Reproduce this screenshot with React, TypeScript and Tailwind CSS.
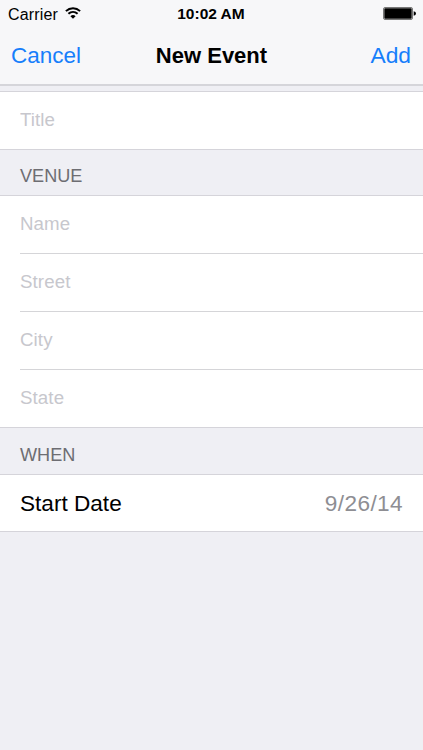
import type { ReactNode } from "react";

function StatusBar() {
  return (
    <div className="grid h-7 grid-cols-3 items-center pl-2 pr-[7px]">
      <div className="flex items-center gap-[7px]">
        <span className="pt-px text-[16px] leading-5 tracking-[0.15px]">Carrier</span>
        <svg className="-mt-0.5 h-3 w-4 shrink-0" viewBox="0 0 16 12" fill="none" stroke="black">
          <path d="M0.9 4.1C5 0.2 11 0.2 15.1 4.1" strokeWidth="2" />
          <path d="M3.4 6.8C6.1 4.3 9.9 4.3 12.6 6.8" strokeWidth="2" />
          <path d="M8 11.8L5.4 9.2Q8 7 10.6 9.2Z" fill="black" stroke="none" />
        </svg>
      </div>
      <span className="whitespace-nowrap pr-0.5 text-center text-[15.5px] font-bold leading-5">10:02 AM</span>
      <svg className="-mt-px ml-auto h-[13px] w-[33px]" viewBox="0 0 33 13">
        <rect x="0.5" y="0.5" width="29" height="12" rx="1.5" fill="white" stroke="#777777" />
        <rect x="1.3" y="1.3" width="27.4" height="10.4" rx="0.7" fill="black" />
        <path d="M30.7 4.3Q33 4.8 33 6.5T30.7 8.7Z" fill="black" />
      </svg>
    </div>
  );
}

function SectionHeader({ children, className }: { children: ReactNode; className: string }) {
  return (
    <h2 className={`pl-5 text-[18.1px] leading-5 text-[#6d6d72] ${className}`}>{children}</h2>
  );
}

function Field({ label, last = false }: { label: string; last?: boolean }) {
  return (
    <div className={last ? "h-[57px] pl-5" : "h-[58px] pl-5"}>
      <div className={`flex h-full items-center ${last ? "" : "border-b border-[#d5d5d8]"}`}>
        <input
          aria-label={label}
          placeholder={label}
          className="h-full w-full bg-transparent pb-0.5 text-[18.7px] tracking-[0.1px] outline-none placeholder:text-[#c7c7cd]"
        />
      </div>
    </div>
  );
}

function Group({ children }: { children: ReactNode }) {
  return <div className="border-y border-[#d5d4da] bg-white">{children}</div>;
}

export default function App() {
  return (
    <main className="h-[750px] w-full overflow-hidden bg-[#efeff4] font-['Liberation_Sans',Arial,sans-serif] text-black">
      <header className="h-[86px] border-b-2 border-[#d5d5da] bg-[#f7f7f9]">
        <StatusBar />
        <nav className="grid h-14 grid-cols-3 items-center pl-[11px] pr-3">
          <button className="text-left text-[22.5px] text-[#167efb]">Cancel</button>
          <h1 className="whitespace-nowrap pb-px pl-px text-center text-[22px] font-bold">New Event</h1>
          <button className="pb-0.5 text-right text-[22.8px] text-[#167efb]">Add</button>
        </nav>
      </header>
      <div className="pt-[5px]">
        <Group>
          <Field label="Title" last />
        </Group>
        <SectionHeader className="h-[45px] pt-4">VENUE</SectionHeader>
        <Group>
          <Field label="Name" />
          <Field label="Street" />
          <Field label="City" />
          <Field label="State" last />
        </Group>
        <SectionHeader className="h-[46px] pt-[17px]">WHEN</SectionHeader>
        <Group>
          <div className="flex h-14 items-center justify-between pl-5 pr-5 pt-0.5 text-[22.6px]">
            <span>Start Date</span>
            <span className="tracking-[0.4px] text-[#8e8e93]">9/26/14</span>
          </div>
        </Group>
      </div>
    </main>
  );
}
